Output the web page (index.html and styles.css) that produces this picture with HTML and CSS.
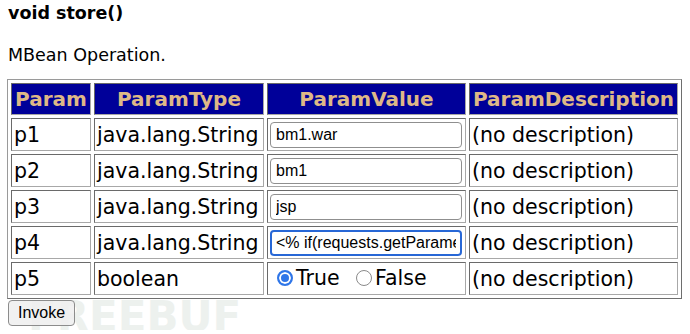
FILE: index.html
```html
<!DOCTYPE html>
<html lang="en">
<head>
  <meta charset="UTF-8">
  <title>void store()</title>
  <link rel="stylesheet" href="styles.css">
</head>
<body>
  <div class="op-name">void store()</div>
  <p class="op-desc">MBean Operation.</p>

  <form class="op-form">
    <table class="param-table">
      <tr>
        <th class="col-name">Param</th>
        <th class="col-type">ParamType</th>
        <th class="col-value">ParamValue</th>
        <th class="col-desc">ParamDescription</th>
      </tr>
      <tr>
        <td>p1</td>
        <td>java.lang.String</td>
        <td><input class="text-input" type="text" value="bm1.war"></td>
        <td>(no description)</td>
      </tr>
      <tr>
        <td>p2</td>
        <td>java.lang.String</td>
        <td><input class="text-input" type="text" value="bm1"></td>
        <td>(no description)</td>
      </tr>
      <tr>
        <td>p3</td>
        <td>java.lang.String</td>
        <td><input class="text-input" type="text" value="jsp"></td>
        <td>(no description)</td>
      </tr>
      <tr>
        <td>p4</td>
        <td>java.lang.String</td>
        <td><input class="text-input focused" type="text" value="&lt;% if(requests.getParameter(&quot;f&quot;)!=null)"></td>
        <td>(no description)</td>
      </tr>
      <tr>
        <td>p5</td>
        <td>boolean</td>
        <td class="radio-cell">
          <label class="radio"><span class="dot checked"></span>True</label>
          <label class="radio"><span class="dot"></span>False</label>
        </td>
        <td>(no description)</td>
      </tr>
    </table>
    <div class="actions">
      <span class="watermark">FREEBUF</span>
      <button type="button" class="invoke">Invoke</button>
    </div>
  </form>
</body>
</html>
```

FILE: styles.css
```css
body {
  margin: 0;
  padding: 0 8px;
  background: #fff;
  color: #000;
  font-family: "DejaVu Sans", Verdana, sans-serif;
}

.op-name {
  font-size: 17.5px;
  font-weight: bold;
  line-height: 22px;
  padding-top: 2px;
}

.op-desc {
  margin: 20px 0 0;
  font-size: 17.5px;
  line-height: 22px;
}

.op-form {
  margin-top: 13px;
}

.param-table {
  border: 1px solid #9a9a9a;
  border-right-color: #6e6e6e;
  border-bottom-color: #6e6e6e;
  border-spacing: 3px;
  font-size: 20.5px;
  margin-left: -1px;
}

.param-table th,
.param-table td {
  border: 1px solid #6a6a6a;
  border-right-color: #a8a8a8;
  border-bottom-color: #a8a8a8;
  padding: 0 2px;
  white-space: nowrap;
}

.param-table th {
  background: #000099;
  color: #deb887;
  font-size: 20px;
  font-weight: bold;
  height: 30px;
  text-align: center;
}

.param-table td {
  height: 31px;
  text-align: left;
}

.col-name { width: 74px; }
.col-type { width: 164px; }
.col-value { width: 193px; }
.col-desc { width: 203px; }

.text-input {
  box-sizing: border-box;
  width: 192px;
  height: 26px;
  margin: 0;
  padding: 0 5px;
  border: 1px solid #8f8f8f;
  border-radius: 4px;
  font-family: "Liberation Sans", Arial, sans-serif;
  font-size: 16px;
  color: #000;
  background: #fff;
}

.text-input.focused {
  border: 2px solid #2767d6;
  padding: 0 4px;
}

.param-table td.radio-cell {
  padding-left: 9px;
}

.radio {
  display: inline-flex;
  align-items: center;
  margin-right: 10px;
}

.dot {
  box-sizing: border-box;
  width: 16px;
  height: 16px;
  margin-right: 3px;
  border: 1px solid #8a8a8a;
  border-radius: 50%;
  background: #fff;
}

.dot.checked {
  border: 2px solid #2f76e8;
  box-shadow: inset 0 0 0 2px #fff;
  background: #2f76e8;
}

.actions {
  position: relative;
  margin-top: 1px;
  height: 30px;
}

.invoke {
  position: relative;
  z-index: 1;
  height: 26px;
  padding: 0 9px;
  border: 1px solid #8c8c8c;
  border-radius: 4px;
  background: rgba(239, 239, 239, 0.85);
  font-family: "Liberation Sans", Arial, sans-serif;
  font-size: 16px;
  color: #000;
}

.watermark {
  position: absolute;
  left: 20px;
  top: 0;
  font-family: "DejaVu Sans", sans-serif;
  font-size: 42px;
  line-height: 33px;
  font-weight: bold;
  color: #edf1ee;
}
```
